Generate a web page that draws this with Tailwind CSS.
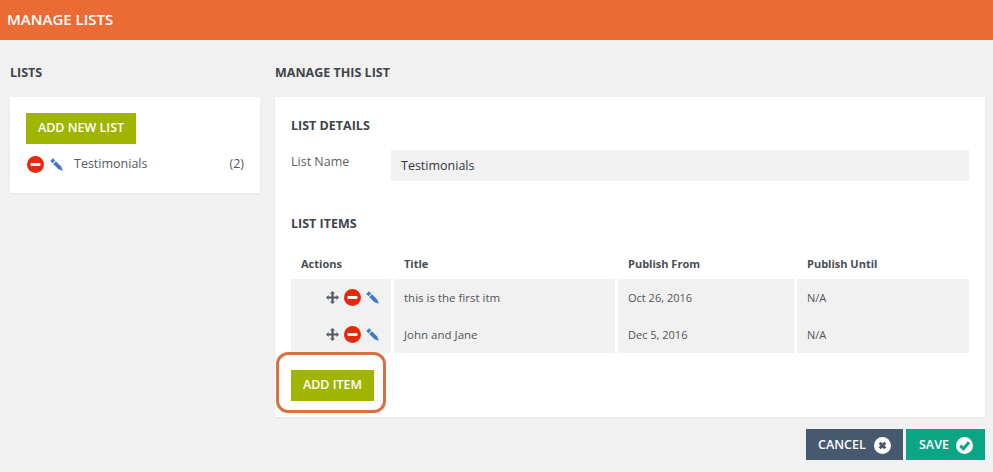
<!DOCTYPE html>
<html>
<head>
<meta charset="utf-8">
<script src="https://cdn.jsdelivr.net/npm/@tailwindcss/browser@4"></script>
</head>
<body class="m-0">
<div class="w-[993px] h-[472px] overflow-hidden bg-[#f1f1f1] font-['Open_Sans',sans-serif] text-[#444b52] text-[13px]">
  <header class="h-10 bg-[#ea6b33] flex items-center pl-[7px] pb-[2px] text-white text-[15px] font-semibold">MANAGE LISTS</header>
  <div class="flex pl-[10px] pr-[8px] gap-[15px]">
    <aside class="w-[250px] shrink-0">
      <h2 class="h-[57px] pt-[24px] text-[12.5px] leading-[18px] font-bold text-[#3f444b]">LISTS</h2>
      <div class="bg-white h-[96px] pt-4 px-4 shadow-[0_1px_2px_rgba(0,0,0,0.05)]">
        <button class="block h-[31px] w-[110px] bg-[#a0b500] text-white text-[12.5px] font-semibold">ADD NEW LIST</button>
        <div class="flex items-center h-[18px] mt-[11px] pl-[1px]">
          <svg class="w-[17px] h-[17px]" viewBox="0 0 17 17"><circle cx="8.5" cy="8.5" r="8.5" fill="#e32a0c"/><rect x="3.5" y="7" width="10" height="3" rx="1" fill="#fff"/></svg>
          <svg class="w-[13px] h-[13px] ml-[6px]" viewBox="0 0 13 13"><path d="M0.3 3 L3 0.3 L5.2 2.5 L2.5 5.2Z" fill="#3f78c4"/><path d="M3.2 5.9 L5.9 3.2 L11.2 8.5 L12.8 12.8 L8.5 11.2Z" fill="#3f78c4"/></svg>
          <span class="ml-[11px] text-[12.5px] text-[#555a60]">Testimonials</span>
          <span class="ml-auto text-[12.5px] text-[#555a60]">(2)</span>
        </div>
      </div>
    </aside>
    <main class="flex-1 min-w-0">
      <h2 class="h-[57px] pt-[24px] text-[12.5px] leading-[18px] font-bold text-[#3f444b]">MANAGE THIS LIST</h2>
      <section class="relative bg-white h-[320px] pl-4 pr-4 shadow-[0_1px_2px_rgba(0,0,0,0.05)]">
        <h3 class="pt-[20px] text-[12.5px] leading-[18px] font-bold text-[#3f444b]">LIST DETAILS</h3>
        <div class="flex mt-[15px]">
          <label class="w-[100px] shrink-0 pt-[3px] text-[12.5px] leading-[18px] text-[#5a5f65]">List Name</label>
          <div class="flex-1 h-[31px] bg-[#f1f1f1] pl-[10px] pt-[2px] flex items-center text-[12.5px] text-[#33373c]">Testimonials</div>
        </div>
        <h3 class="mt-[34px] text-[12.5px] leading-[18px] font-bold text-[#3f444b]">LIST ITEMS</h3>
        <table class="mt-[22px] w-[678px] table-fixed border-separate border-spacing-0 text-[11.5px]">
          <colgroup><col class="w-[103px]"><col class="w-[224px]"><col class="w-[179px]"><col class="w-[172px]"></colgroup>
          <thead>
            <tr class="h-[24px] text-left text-[11px] font-bold text-[#484d53]">
              <th class="pl-[10px] pb-[6px] font-bold">Actions</th>
              <th class="pl-[10px] pb-[6px] font-bold">Title</th>
              <th class="pl-[10px] pb-[6px] font-bold">Publish From</th>
              <th class="pl-[10px] pb-[6px] font-bold">Publish Until</th>
            </tr>
          </thead>
          <tbody class="text-[#50555b]">
            <tr class="h-[37px]">
              <td class="p-0 border-r-[3px] border-white bg-[#f1f1f1] bg-clip-padding">
                <div class="flex items-center justify-end pr-[12px] gap-[5px]">
                  <svg class="w-[13px] h-[13px]" viewBox="0 0 14 14" fill="#555b62"><path d="M7 0 L9.8 2.8 H8.2 V5.8 H11.2 V4.2 L14 7 L11.2 9.8 V8.2 H8.2 V11.2 H9.8 L7 14 L4.2 11.2 H5.8 V8.2 H2.8 V9.8 L0 7 L2.8 4.2 V5.8 H5.8 V2.8 H4.2Z"/></svg>
                  <svg class="w-[17px] h-[17px]" viewBox="0 0 17 17"><circle cx="8.5" cy="8.5" r="8.5" fill="#e32a0c"/><rect x="3.5" y="7" width="10" height="3" rx="1" fill="#fff"/></svg>
                  <svg class="w-[13px] h-[13px]" viewBox="0 0 13 13"><path d="M0.3 3 L3 0.3 L5.2 2.5 L2.5 5.2Z" fill="#3f78c4"/><path d="M3.2 5.9 L5.9 3.2 L11.2 8.5 L12.8 12.8 L8.5 11.2Z" fill="#3f78c4"/></svg>
                </div>
              </td>
              <td class="pl-[10px] border-r-[3px] border-white bg-[#f1f1f1] bg-clip-padding">this is the first itm</td>
              <td class="pl-[10px] pt-[2px] border-r-[3px] border-white bg-[#f1f1f1] bg-clip-padding text-[11px]">Oct 26, 2016</td>
              <td class="pl-[10px] pt-[2px] bg-[#f1f1f1] text-[11px]">N/A</td>
            </tr>
            <tr class="h-[37px]">
              <td class="p-0 border-r-[3px] border-white bg-[#f1f1f1] bg-clip-padding">
                <div class="flex items-center justify-end pr-[12px] gap-[5px]">
                  <svg class="w-[13px] h-[13px]" viewBox="0 0 14 14" fill="#555b62"><path d="M7 0 L9.8 2.8 H8.2 V5.8 H11.2 V4.2 L14 7 L11.2 9.8 V8.2 H8.2 V11.2 H9.8 L7 14 L4.2 11.2 H5.8 V8.2 H2.8 V9.8 L0 7 L2.8 4.2 V5.8 H5.8 V2.8 H4.2Z"/></svg>
                  <svg class="w-[17px] h-[17px]" viewBox="0 0 17 17"><circle cx="8.5" cy="8.5" r="8.5" fill="#e32a0c"/><rect x="3.5" y="7" width="10" height="3" rx="1" fill="#fff"/></svg>
                  <svg class="w-[13px] h-[13px]" viewBox="0 0 13 13"><path d="M0.3 3 L3 0.3 L5.2 2.5 L2.5 5.2Z" fill="#3f78c4"/><path d="M3.2 5.9 L5.9 3.2 L11.2 8.5 L12.8 12.8 L8.5 11.2Z" fill="#3f78c4"/></svg>
                </div>
              </td>
              <td class="pl-[10px] border-r-[3px] border-white bg-[#f1f1f1] bg-clip-padding">John and Jane</td>
              <td class="pl-[10px] pt-[2px] border-r-[3px] border-white bg-[#f1f1f1] bg-clip-padding text-[11px]">Dec 5, 2016</td>
              <td class="pl-[10px] pt-[2px] bg-[#f1f1f1] text-[11px]">N/A</td>
            </tr>
          </tbody>
        </table>
        <button class="block mt-[17px] h-[31px] w-[83px] bg-[#a0b500] text-white text-[12.5px] font-semibold">ADD ITEM</button>
        <div class="absolute left-[1px] top-[255px] w-[110px] h-[61px] border-[3px] border-[#d9703f] rounded-[12px]"></div>
      </section>
      <div class="flex justify-end gap-[3px] mt-[12px]">
        <button class="h-[31px] w-[97px] bg-[#47596e] text-white text-[12.5px] font-semibold flex items-center pl-[12px] pt-[1px]">CANCEL
          <svg class="w-[17px] h-[17px] ml-[8px]" viewBox="0 0 17 17"><circle cx="8.5" cy="8.5" r="8.5" fill="#fff"/><path d="M5.7 5.7 L11.3 11.3 M11.3 5.7 L5.7 11.3" stroke="#47596e" stroke-width="3"/></svg>
        </button>
        <button class="h-[31px] w-[79px] bg-[#09a585] text-white text-[12.5px] font-semibold flex items-center pl-[13px] pt-[1px]">SAVE
          <svg class="w-[17px] h-[17px] ml-[7px]" viewBox="0 0 17 17"><circle cx="8.5" cy="8.5" r="8.5" fill="#fff"/><path d="M4.3 8.6 L7.4 11.7 L13 5.2" fill="none" stroke="#09a585" stroke-width="3"/></svg>
        </button>
      </div>
    </main>
  </div>
</div>
</body>
</html>
